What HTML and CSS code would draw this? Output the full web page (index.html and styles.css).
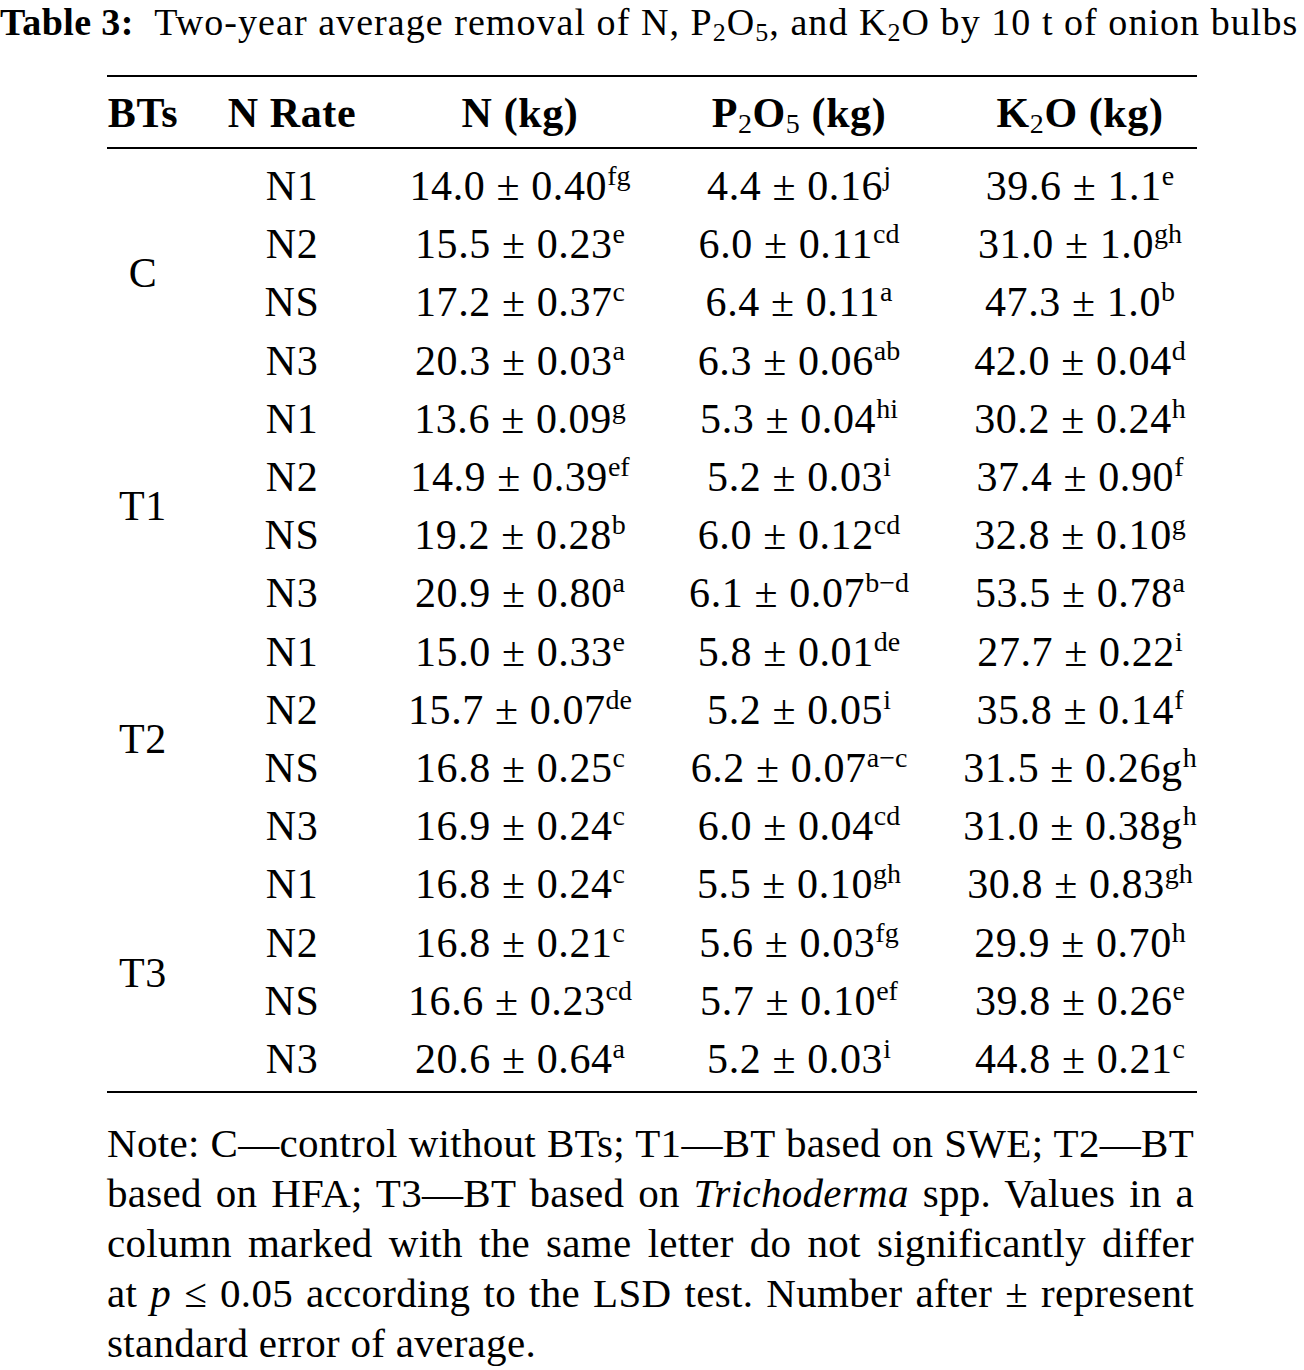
FILE: index.html
```html
<!DOCTYPE html>
<html>
<head>
<meta charset="utf-8">
<link rel="stylesheet" href="styles.css">
</head>
<body>
<div class="page">
  <p class="caption"><b>Table 3:</b>&nbsp; Two-year average removal of N, P<sub>2</sub>O<sub>5</sub>, and K<sub>2</sub>O by 10 t of onion bulbs</p>
  <table class="data">
    <colgroup>
      <col class="c1"><col class="c2"><col class="c3"><col class="c4"><col class="c5">
    </colgroup>
    <thead>
      <tr>
        <th>BTs</th><th>N Rate</th><th>N (kg)</th><th>P<sub class="hs">2</sub>O<sub class="hs">5</sub> (kg)</th><th>K<sub class="hs">2</sub>O (kg)</th>
      </tr>
    </thead>
    <tbody>
      <tr class="first"><td rowspan="4">C</td><td>N1</td><td>14.0 ± 0.40<sup>fg</sup></td><td>4.4 ± 0.16<sup>j</sup></td><td>39.6 ± 1.1<sup>e</sup></td></tr>
      <tr><td>N2</td><td>15.5 ± 0.23<sup>e</sup></td><td>6.0 ± 0.11<sup>cd</sup></td><td>31.0 ± 1.0<sup>gh</sup></td></tr>
      <tr><td>NS</td><td>17.2 ± 0.37<sup>c</sup></td><td>6.4 ± 0.11<sup>a</sup></td><td>47.3 ± 1.0<sup>b</sup></td></tr>
      <tr><td>N3</td><td>20.3 ± 0.03<sup>a</sup></td><td>6.3 ± 0.06<sup>ab</sup></td><td>42.0 ± 0.04<sup>d</sup></td></tr>
      <tr><td rowspan="4">T1</td><td>N1</td><td>13.6 ± 0.09<sup>g</sup></td><td>5.3 ± 0.04<sup>hi</sup></td><td>30.2 ± 0.24<sup>h</sup></td></tr>
      <tr><td>N2</td><td>14.9 ± 0.39<sup>ef</sup></td><td>5.2 ± 0.03<sup>i</sup></td><td>37.4 ± 0.90<sup>f</sup></td></tr>
      <tr><td>NS</td><td>19.2 ± 0.28<sup>b</sup></td><td>6.0 ± 0.12<sup>cd</sup></td><td>32.8 ± 0.10<sup>g</sup></td></tr>
      <tr><td>N3</td><td>20.9 ± 0.80<sup>a</sup></td><td>6.1 ± 0.07<sup>b−d</sup></td><td>53.5 ± 0.78<sup>a</sup></td></tr>
      <tr><td rowspan="4">T2</td><td>N1</td><td>15.0 ± 0.33<sup>e</sup></td><td>5.8 ± 0.01<sup>de</sup></td><td>27.7 ± 0.22<sup>i</sup></td></tr>
      <tr><td>N2</td><td>15.7 ± 0.07<sup>de</sup></td><td>5.2 ± 0.05<sup>i</sup></td><td>35.8 ± 0.14<sup>f</sup></td></tr>
      <tr><td>NS</td><td>16.8 ± 0.25<sup>c</sup></td><td>6.2 ± 0.07<sup>a−c</sup></td><td>31.5 ± 0.26g<sup>h</sup></td></tr>
      <tr><td>N3</td><td>16.9 ± 0.24<sup>c</sup></td><td>6.0 ± 0.04<sup>cd</sup></td><td>31.0 ± 0.38g<sup>h</sup></td></tr>
      <tr><td rowspan="4">T3</td><td>N1</td><td>16.8 ± 0.24<sup>c</sup></td><td>5.5 ± 0.10<sup>gh</sup></td><td>30.8 ± 0.83<sup>gh</sup></td></tr>
      <tr><td>N2</td><td>16.8 ± 0.21<sup>c</sup></td><td>5.6 ± 0.03<sup>fg</sup></td><td>29.9 ± 0.70<sup>h</sup></td></tr>
      <tr><td>NS</td><td>16.6 ± 0.23<sup>cd</sup></td><td>5.7 ± 0.10<sup>ef</sup></td><td>39.8 ± 0.26<sup>e</sup></td></tr>
      <tr class="last"><td>N3</td><td>20.6 ± 0.64<sup>a</sup></td><td>5.2 ± 0.03<sup>i</sup></td><td>44.8 ± 0.21<sup>c</sup></td></tr>
    </tbody>
  </table>
  <p class="note">
    <span class="ln">Note: C—control without BTs; T1—BT based on SWE; T2—BT</span>
    <span class="ln">based on HFA; T3—BT based on <i>Trichoderma</i> spp. Values in a</span>
    <span class="ln">column marked with the same letter do not significantly differ</span>
    <span class="ln">at <i>p</i> ≤ 0.05 according to the LSD test. Number after ± represent</span>
    <span class="ln end">standard error of average.</span>
  </p>
</div>
</body>
</html>
```
FILE: styles.css
```css
html, body {
  margin: 0;
  padding: 0;
  background: #fff;
}
body {
  font-family: "Liberation Serif", "Times New Roman", serif;
  color: #000;
  width: 1304px;
}
.page {
  display: flex;
  flex-direction: column;
}
.caption {
  margin: 0;
  padding-top: 2px;
  font-size: 38px;
  line-height: 40px;
  letter-spacing: 1.05px;
  white-space: nowrap;
}
.caption b {
  letter-spacing: 0.4px;
}
.caption sub {
  font-size: 26px;
  vertical-align: -6px;
  line-height: 0;
}
.data {
  margin: 33px 0 0 107px;
  width: 1090px;
  border-collapse: collapse;
  table-layout: fixed;
  font-size: 42px;
  letter-spacing: 0.6px;
}
.c1 { width: 72px; }
.c2 { width: 226px; }
.c3 { width: 230px; }
.c4 { width: 328px; }
.c5 { width: 234px; }
.data thead tr {
  border-top: 2px solid #000;
  border-bottom: 2px solid #000;
}
.data th {
  font-weight: bold;
  height: 72px;
  padding: 2px 0 0;
  box-sizing: border-box;
  line-height: 42px;
  text-align: center;
  vertical-align: middle;
  white-space: nowrap;
}
.hs {
  font-weight: normal;
  font-size: 28px;
  vertical-align: -6px;
  line-height: 0;
}
.data td {
  padding: 0;
  text-align: center;
  vertical-align: middle;
  line-height: 58.2px;
  white-space: nowrap;
}
.data tbody tr.last {
  border-bottom: 2px solid #000;
}
.data tr.first td { padding-top: 8px; }
.data tr.last td { padding-bottom: 3px; }
.data sup {
  font-size: 28px;
  vertical-align: 15px;
  line-height: 0;
  letter-spacing: 0;
}
.note {
  margin: 25px 0 0 107px;
  width: 1087px;
  font-size: 41px;
  line-height: 50px;
  letter-spacing: 0.3px;
}
.ln {
  display: block;
  text-align: justify;
  text-align-last: justify;
}
.ln.end {
  text-align: left;
  text-align-last: left;
}
```
